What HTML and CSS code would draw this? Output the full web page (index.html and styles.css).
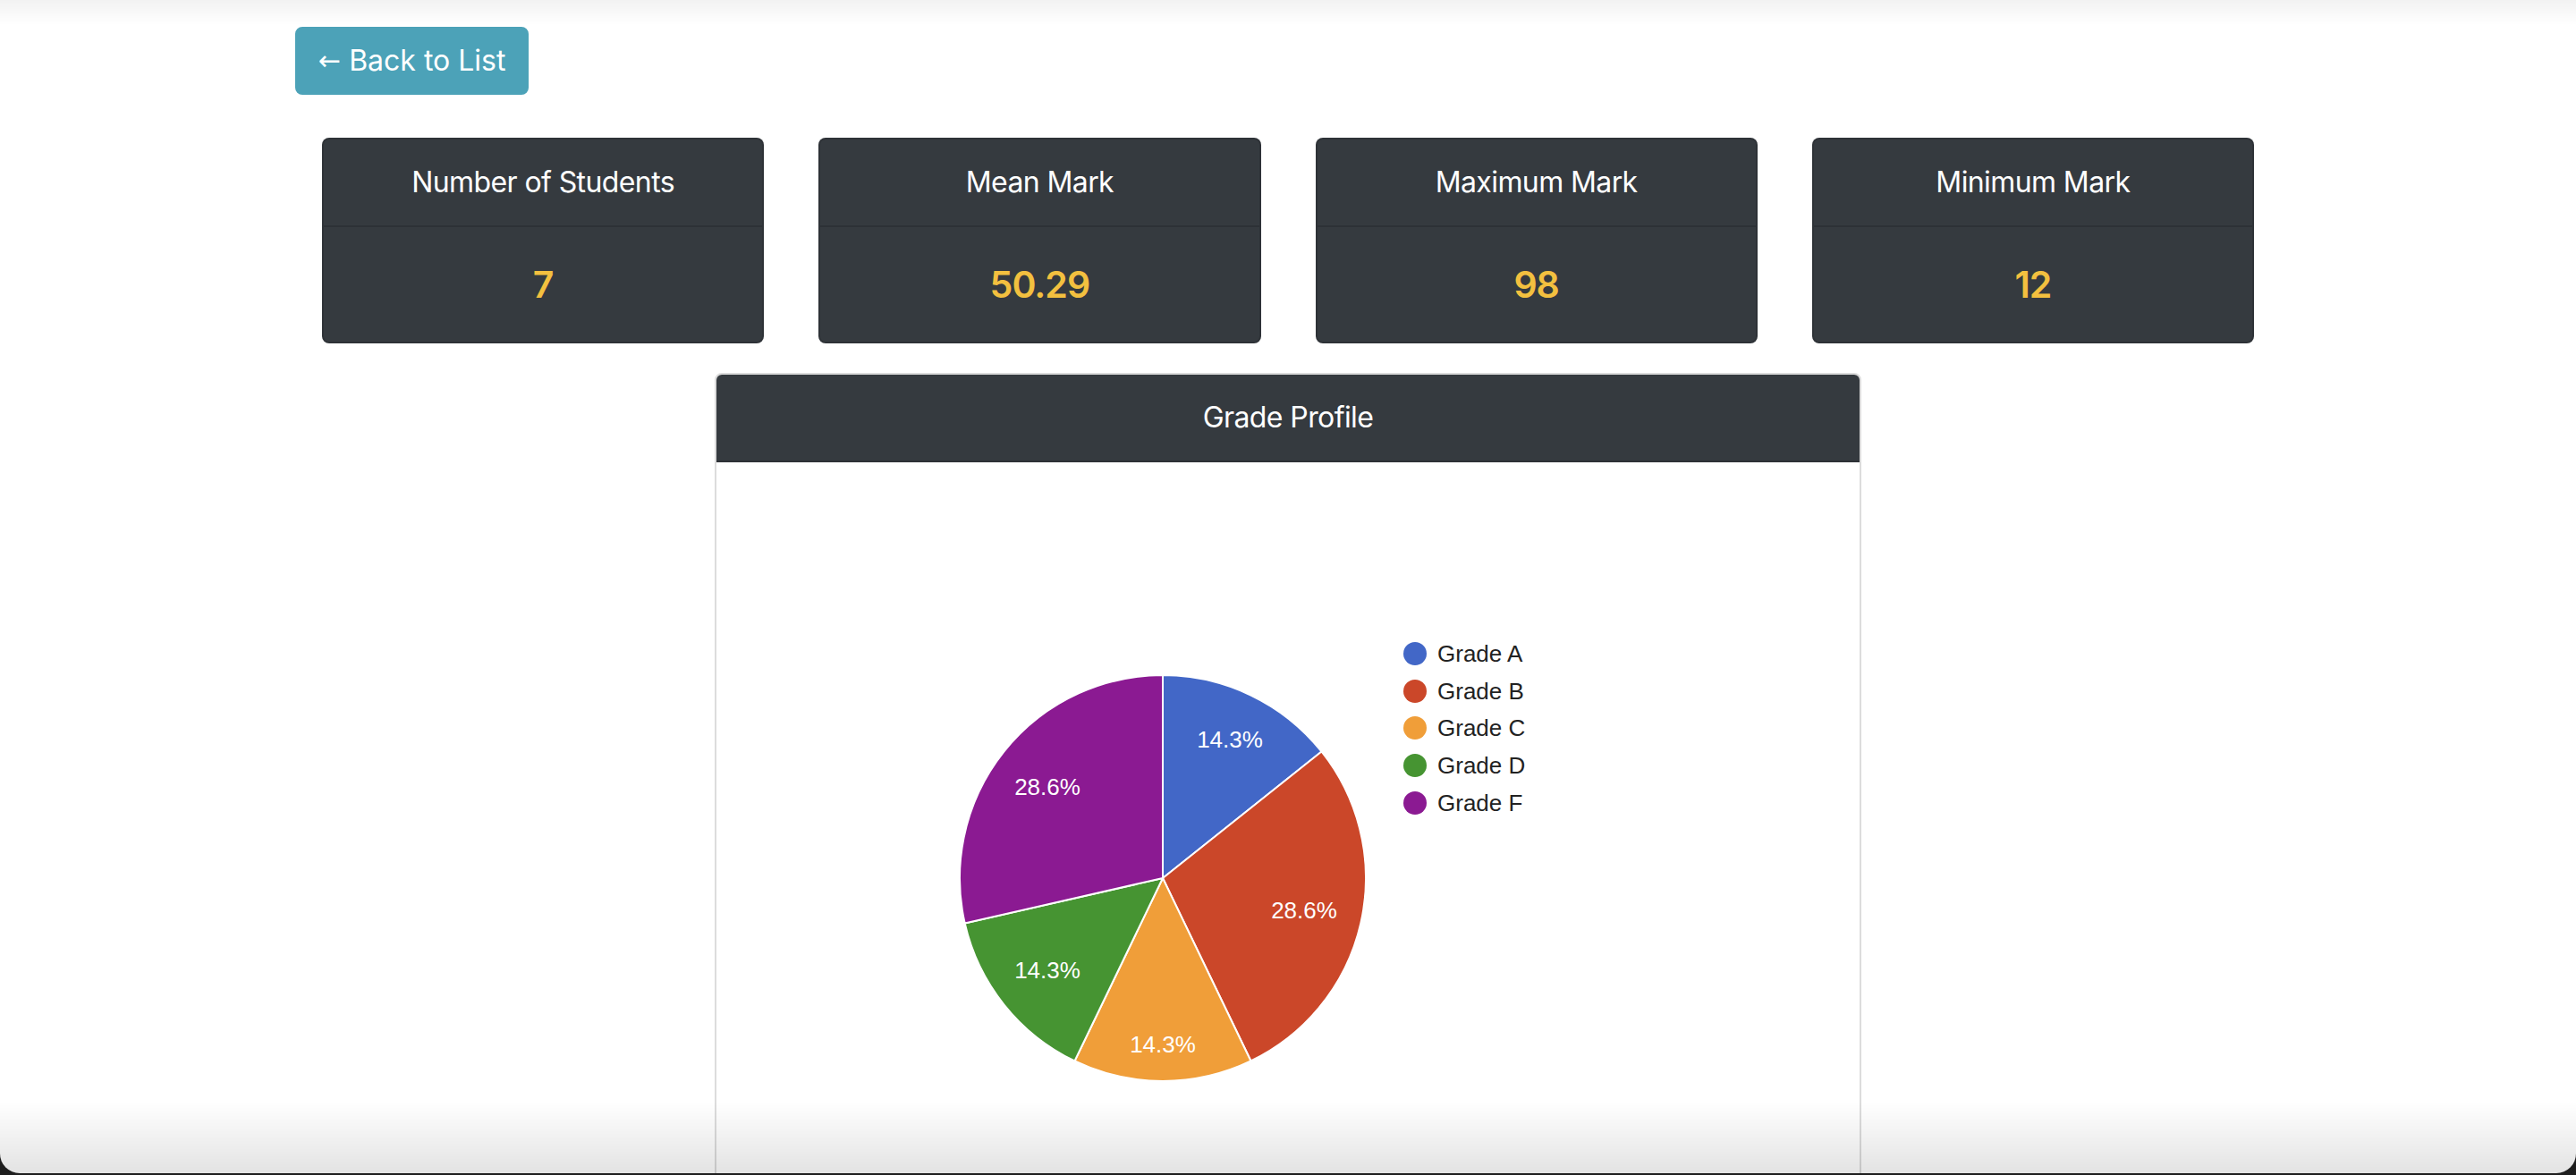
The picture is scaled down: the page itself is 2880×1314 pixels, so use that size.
FILE: index.html
```html
<!DOCTYPE html>
<html lang="en">
<head>
<meta charset="utf-8">
<title>Grade Profile</title>
<link rel="stylesheet" href="styles.css">
</head>
<body>
<div class="container">
  <div class="toolbar">
    <a class="btn-back" href="#"><span class="arrow">&larr;</span> Back to List</a>
  </div>

  <div class="stats">
    <div class="stat-card">
      <div class="stat-head">Number of Students</div>
      <div class="stat-body"><span class="stat-value">7</span></div>
    </div>
    <div class="stat-card">
      <div class="stat-head">Mean Mark</div>
      <div class="stat-body"><span class="stat-value">50.29</span></div>
    </div>
    <div class="stat-card">
      <div class="stat-head">Maximum Mark</div>
      <div class="stat-body"><span class="stat-value">98</span></div>
    </div>
    <div class="stat-card">
      <div class="stat-head">Minimum Mark</div>
      <div class="stat-body"><span class="stat-value">12</span></div>
    </div>
  </div>

  <div class="chart-card">
    <div class="chart-head">Grade Profile</div>
    <div class="chart-body">
      <svg class="pie" width="1278" height="820" viewBox="0 0 1278 820" xmlns="http://www.w3.org/2000/svg">
        <g stroke="#ffffff" stroke-width="2" stroke-linejoin="round">
          <path fill="#4267c7" d="M499,465 L499,238 A227,227 0 0 1 676.48,323.47 Z"/>
          <path fill="#cb4729" d="M499,465 L676.48,323.47 A227,227 0 0 1 597.49,669.52 Z"/>
          <path fill="#f09e39" d="M499,465 L597.49,669.52 A227,227 0 0 1 400.51,669.52 Z"/>
          <path fill="#469432" d="M499,465 L400.51,669.52 A227,227 0 0 1 277.69,515.51 Z"/>
          <path fill="#8b1a92" d="M499,465 L277.69,515.51 A227,227 0 0 1 499,238 Z"/>
        </g>
        <g class="slice-labels" text-anchor="middle">
          <text x="574" y="319">14.3%</text>
          <text x="657" y="510">28.6%</text>
          <text x="499" y="660">14.3%</text>
          <text x="370" y="577">14.3%</text>
          <text x="370" y="372">28.6%</text>
        </g>
        <g class="legend">
          <circle cx="781" cy="214" r="13" fill="#4267c7"/>
          <text x="806" y="223">Grade A</text>
          <circle cx="781" cy="256" r="13" fill="#cb4729"/>
          <text x="806" y="265">Grade B</text>
          <circle cx="781" cy="297" r="13" fill="#f09e39"/>
          <text x="806" y="306">Grade C</text>
          <circle cx="781" cy="339" r="13" fill="#469432"/>
          <text x="806" y="348">Grade D</text>
          <circle cx="781" cy="381" r="13" fill="#8b1a92"/>
          <text x="806" y="390">Grade F</text>
        </g>
      </svg>
    </div>
  </div>
</div>
<div class="window-frame"></div>
</body>
</html>
```

FILE: styles.css
```css
html, body {
  margin: 0;
  padding: 0;
  height: 100%;
  overflow: hidden;
  background: #ffffff;
}

body {
  font-family: Inter, "Noto Sans", "Liberation Sans", sans-serif;
  color: #212529;
}

.container {
  width: 2220px;
  margin: 0 auto;
  padding-top: 30px;
}

.toolbar {
  display: flex;
}

.btn-back {
  display: inline-flex;
  align-items: center;
  height: 76px;
  box-sizing: border-box;
  padding: 0 24px;
  background: #4ca2b8;
  border: 2px solid #4ca2b8;
  border-radius: 8px;
  color: #ffffff;
  font-size: 32px;
  line-height: 48px;
  text-decoration: none;
  white-space: pre;
}

.btn-back .arrow {
  font-family: "DejaVu Sans", sans-serif;
  font-size: 30px;
}

.stats {
  display: flex;
  gap: 61px;
  padding: 0 30px;
  margin-top: 48px;
}

.stat-card {
  flex: 1 1 0;
  background: #353a3f;
  border: 2px solid rgba(0, 0, 0, 0.12);
  border-radius: 8px;
  overflow: hidden;
  text-align: center;
}

.stat-head {
  padding: 24px 40px;
  line-height: 48px;
  font-size: 32px;
  letter-spacing: -0.6px;
  color: #ffffff;
  border-bottom: 2px solid rgba(0, 0, 0, 0.14);
}

.stat-body {
  padding: 40px;
  line-height: 48px;
  height: 48px;
}

.stat-value {
  font-size: 41px;
  font-weight: 600;
  letter-spacing: -1px;
  color: #f3c03f;
}

.chart-card {
  width: 1282px;
  box-sizing: border-box;
  margin: 33px auto 0;
  border: 2px solid #dcdcdc;
  border-radius: 8px;
  overflow: hidden;
  background: #ffffff;
}

.chart-head {
  background: #353a3f;
  color: #ffffff;
  text-align: center;
  font-size: 32px;
  letter-spacing: -0.6px;
  line-height: 48px;
  padding: 24px 40px;
  border-bottom: 2px solid rgba(0, 0, 0, 0.14);
}

.chart-body {
  display: flex;
}

.pie {
  display: block;
  font-family: "Liberation Sans", Arial, sans-serif;
}

.slice-labels text {
  fill: #ffffff;
  font-size: 26px;
}

.legend text {
  fill: #222222;
  font-size: 26px;
}

.window-frame {
  position: fixed;
  top: 0;
  left: 0;
  right: 0;
  bottom: 2px;
  border-radius: 0 0 22px 22px;
  pointer-events: none;
  background:
    linear-gradient(to bottom, rgba(0, 0, 0, 0.05), rgba(0, 0, 0, 0) 28px),
    linear-gradient(to top, rgba(0, 0, 0, 0.11), rgba(0, 0, 0, 0) 80px);
  box-shadow: 0 0 0 40px #1e1e1e;
}
```
